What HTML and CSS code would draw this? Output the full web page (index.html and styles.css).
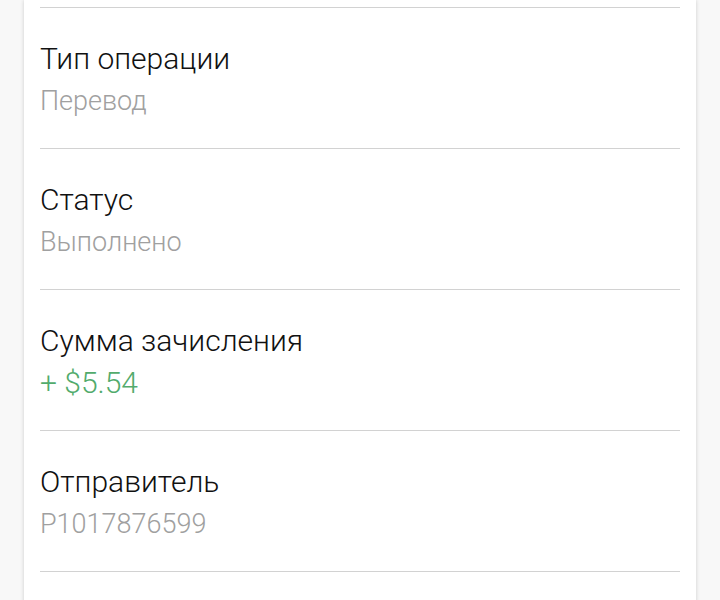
FILE: index.html
```html
<!DOCTYPE html>
<html lang="ru">
<head>
    <meta charset="UTF-8">
    <meta name="viewport" content="width=device-width, initial-scale=1.0">
    <title>Детали операции</title>
    <link rel="stylesheet" href="styles.css">
</head>
<body>
    <div class="details">
        <div class="row">
            <div class="label">Тип операции</div>
            <div class="value">Перевод</div>
        </div>
        <div class="row">
            <div class="label">Статус</div>
            <div class="value">Выполнено</div>
        </div>
        <div class="row">
            <div class="label">Сумма зачисления</div>
            <div class="value income">+ $5.54</div>
        </div>
        <div class="row">
            <div class="label">Отправитель</div>
            <div class="value">P1017876599</div>
        </div>
        <div class="row"></div>
    </div>
</body>
</html>
```

FILE: styles.css
```css
body {
    margin: 0;
    font-family: Roboto, 'Noto Sans', sans-serif;
    background-color: #f8f8f8;
    overflow: hidden;
}
.details {
    background-color: #ffffff;
    margin: 0 24px;
    padding: 7px 16px 0;
    min-height: 600px;
    box-shadow: 0 0 4px rgba(0, 0, 0, 0.18);
}
.row {
    border-top: 1px solid #d2d2d2;
    padding: 31px 0 27px;
    height: 82px;
}
.label {
    font-size: 30px;
    font-weight: 300;
    line-height: 40px;
    color: #111111;
}
.value {
    font-size: 27px;
    font-weight: 300;
    line-height: 40px;
    margin-top: 2px;
    color: #a0a0a0;
}
.income {
    font-size: 30px;
    color: #52ab6c;
}
```
